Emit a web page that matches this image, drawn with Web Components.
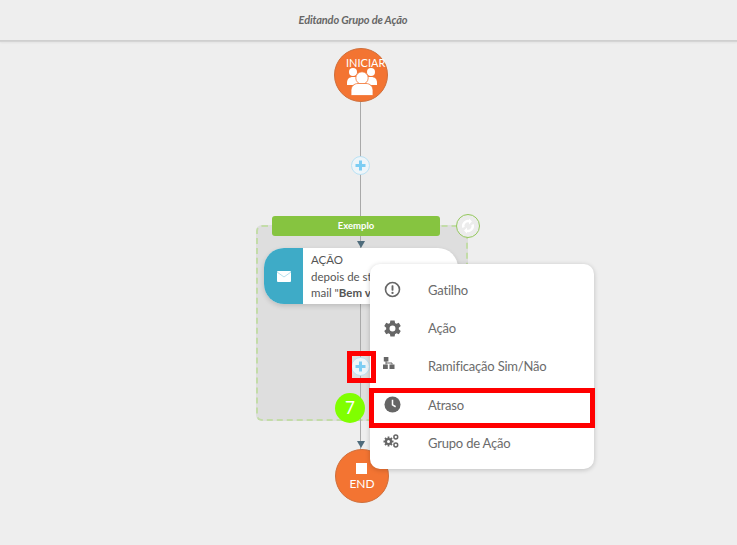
<!DOCTYPE html>
<html lang="pt"><head><meta charset="utf-8"><title>Editando Grupo de Ação</title>
<style>
html,body{margin:0;padding:0;height:100%;overflow:hidden;background:#eee;font-family:Lato,"Open Sans",sans-serif}
flow-page{width:737px;height:545px}
</style></head><body>
<flow-page>
  <flow-header slot="header">Editando Grupo de Ação</flow-header>
  <group-box style="left:256px;top:185px;width:212px;height:196px"></group-box>
  <flow-line style="left:360px;top:62px;height:180px"></flow-line>
  <flow-line style="left:360px;top:264px;height:178px"></flow-line>
  <start-node style="left:334px;top:8px"></start-node>
  <plus-btn style="left:351px;top:116px"></plus-btn>
  <group-title style="left:272px;top:176px">Exemplo</group-title>
  <loop-btn style="left:456px;top:174px"></loop-btn>
  <flow-arrow style="left:357px;top:201px"></flow-arrow>
  <action-card style="left:264px;top:208px"></action-card>
  <plus-btn style="left:351px;top:317px"></plus-btn>
  <step-badge style="left:335px;top:353px">7</step-badge>
  <flow-arrow style="left:357px;top:401px"></flow-arrow>
  <end-node style="left:335px;top:409px"></end-node>
  <flow-menu style="left:370px;top:224px">
    <menu-row label="Gatilho"><svg viewBox="0 0 18 18" width="17" height="17"><circle cx="9" cy="9" r="7.4" fill="none" stroke="#666" stroke-width="1.700"/><rect x="8" y="4.600" width="2" height="5.600" rx=".6" fill="#666"/><circle cx="9" cy="12.600" r="1.200" fill="#666"/></svg></menu-row>
    <menu-row label="Ação"><svg viewBox="2 2 20 20" width="17" height="17"><path fill="#666" d="M19.400 13a7.500 7.500 0 0 0 0-2l2.300-1.800-2.300-3.900-2.700 1.100a7.700 7.700 0 0 0-1.700-1L14.500 2.500h-5L9 5.400a7.700 7.700 0 0 0-1.700 1L4.600 5.300 2.300 9.200 4.600 11a7.500 7.500 0 0 0 0 2l-2.300 1.800 2.300 3.900 2.700-1.100a7.700 7.700 0 0 0 1.700 1l.5 2.900h5l.5-2.900a7.700 7.700 0 0 0 1.700-1l2.700 1.100 2.300-3.900zM12 15.500a3.500 3.500 0 1 1 0-7 3.500 3.500 0 0 1 0 7z"/></svg></menu-row>
    <menu-row label="Ramificação Sim/Não" iconshift="-3" iconleft="-1"><svg viewBox="0 0 12 12" width="12" height="12"><path fill="#666" d="M.8 0h4.600v4.600H.8zM0 7.500h4.800V12H0zM6.500 7.500H11.500V12H6.500z"/><path fill="none" stroke="#666" d="M3 4v3.500M3 6h6v1.500"/></svg></menu-row>
    <menu-row label="Atraso"><svg viewBox="0 0 18 18" width="17" height="17"><circle cx="9" cy="9" r="8.500" fill="#666"/><path d="M9 4v5.400l3.300 2" fill="none" stroke="#fff" stroke-width="1.600"/></svg></menu-row>
    <menu-row label="Grupo de Ação" iconshift="-2" iconleft="-1"><svg viewBox="0 0 16 14" width="16" height="14"><g fill="#666"><circle cx="5.500" cy="7.500" r="3.600"/><g stroke="#666" stroke-width="1.800"><path d="M5.500 2.500v10M.5 7.500h10M2 4l7 7M9 4l-7 7"/></g></g><circle cx="5.500" cy="7.500" r="1.500" fill="#fff"/><circle cx="12.800" cy="3" r="1.900" fill="none" stroke="#666" stroke-width="1.500"/><circle cx="12.800" cy="11" r="1.900" fill="none" stroke="#666" stroke-width="1.500"/></svg></menu-row>
  </flow-menu>
  <red-box style="left:347px;top:311px;width:19px;height:22px"></red-box>
  <red-box style="left:369px;top:348px;width:216px;height:30px"></red-box>
</flow-page>
<script>
function def(name, css, html){
  customElements.define(name, class extends HTMLElement{
    constructor(){super();const r=this.attachShadow({mode:'open'});r.innerHTML='<style>'+css+'</style>'+html;}
  });
}
const abs=':host{position:absolute;display:block;box-sizing:border-box}';
def('flow-page',':host{display:flex;flex-direction:column;background:#eee}.canvas{position:relative;flex:1}',
  '<slot name="header"></slot><div class="canvas"><slot></slot></div>');
def('flow-header',':host{display:flex;flex:none;align-items:center;justify-content:center;height:39px;box-sizing:content-box;padding:0 31px 1px 0;background:#eee;box-shadow:0 1px 0 #cfcfcf,0 2px 0 #d4d4d4,0 3px 2px rgba(0,0,0,.05);font:italic 700 11px Lato,sans-serif;color:#666;letter-spacing:-.15px}','<slot></slot>');
def('flow-line',abs+':host{width:1px;background:#a9a9a9}','');
def('group-box',abs+':host{background:#dedede;border:2px dashed #c3dca8;border-radius:6px}','');
const circle=abs+':host{width:54px;height:54px;border-radius:50%;background:#f37432;border:1px solid #cf6f3b;color:#fff;font:12px Lato,sans-serif;text-align:center}';
def('start-node',circle+'span{position:absolute;left:11px;top:7px;line-height:14px;font-size:11px;white-space:nowrap}svg{position:absolute;left:12px;top:18px}',
  '<span>INICIAR</span><svg width="30" height="29" viewBox="0 0 30 29" fill="#fff"><circle cx="6" cy="5" r="4"/><circle cx="24" cy="5" r="4"/><path d="M0 16c0-4 2-6 6-6h18c4 0 6 2 6 6v2H0z"/><circle cx="15" cy="11" r="6.200" stroke="#f37432" stroke-width=".8"/><path d="M4 29v-5c0-4 3-7 7-7h8c4 0 7 3 7 7v5z" stroke="#f37432" stroke-width=".8" transform="translate(0 -.500)"/></svg>');
def('end-node',circle+'i{position:absolute;left:20px;top:13px;width:11px;height:11px;background:#fff}span{position:absolute;left:0;right:0;top:27px;line-height:14px}',
  '<i></i><span>END</span>');
def('plus-btn',abs+':host{width:19px;height:19px;border-radius:50%;background:#eef5f9;border:1px solid #b9e2f5}svg{display:block;margin:3px}',
  '<svg width="11" height="11" viewBox="0 0 11 11"><path d="M5.500 .500v10M.5 5.500h10" stroke="#7ccdf3" stroke-width="3"/></svg>');
def('group-title',abs+':host{width:168px;height:20px;background:#86c440;border-radius:3px;color:#fff;font:700 9.500px/20px Lato,sans-serif;text-align:center}','<slot></slot>');
def('loop-btn',abs+':host{width:24px;height:24px;border-radius:50%;background:#ececec;border:1px solid #94c85c}svg{display:block;margin:3px}',
  '<svg width="16" height="16" viewBox="0 0 16 16" fill="none" stroke="#fff" stroke-width="2.400"><path d="M3.500 9.500a4.800 4.800 0 0 1 6.500-6"/><path d="M12.500 6.500a4.800 4.800 0 0 1-6.500 6"/><path d="M9 .5l3 3-3 3zM7 9.500l-3 3 3 3z" fill="#fff" stroke="none"/></svg>');
def('flow-arrow',abs+':host{width:8px;height:7px;border-left:4px solid transparent;border-right:4px solid transparent;border-top:7px solid #4f6c7c}','');
def('action-card',abs+':host{display:flex;width:194px;height:56px;background:#fff;border-radius:20px;overflow:hidden;box-shadow:0 2px 5px rgba(0,0,0,.15);font:11.500px/16.500px Lato,sans-serif;color:#555}.ic{width:39px;background:#3eabc7;display:flex;align-items:center;justify-content:center;flex:none}.tx{padding:4px 0 0 8px;white-space:nowrap}',
  '<div class="ic"><svg width="14" height="11" viewBox="0 0 14 11"><rect width="14" height="11" rx="1" fill="#fff"/><path d="M0 1l7 5 7-5" fill="none" stroke="#b5e0ec" stroke-width="1"/></svg></div><div class="tx">AÇÃO<br>depois de start<br>mail "<b>Bem vindo</b></div>');
def('red-box',abs+':host{border:5px solid #f00;box-sizing:content-box}','');
def('step-badge',abs+':host{width:30px;height:30px;border-radius:50%;background:#80ff00;color:#fff;font:400 17px/30px Lato,sans-serif;text-align:center}','<slot></slot>');
def('flow-menu',abs+':host{width:224px;height:205px;background:#fff;border-radius:10px;box-shadow:0 1px 5px rgba(0,0,0,.2);padding:6.600px 0 0;display:flex;flex-direction:column}','<slot></slot>');
customElements.define('menu-row', class extends HTMLElement{
  constructor(){super();this.attachShadow({mode:'open'});}
  connectedCallback(){
    const l=this.getAttribute('label'),i=+this.getAttribute('iconshift')||0,il=+this.getAttribute('iconleft')||0;
    this.shadowRoot.innerHTML='<style>:host{display:flex;align-items:center;height:38.300px;flex:none;font:13px Lato,sans-serif;letter-spacing:-.2px;color:#6b6b6b}.i{width:44px;margin-left:14px;flex:none;display:flex;position:relative;top:'+i+'px;left:'+il+'px}.t{white-space:nowrap}</style><div class="i"><slot></slot></div><div class="t">'+l+'</div>';
  }
});
</script>
</body></html>
